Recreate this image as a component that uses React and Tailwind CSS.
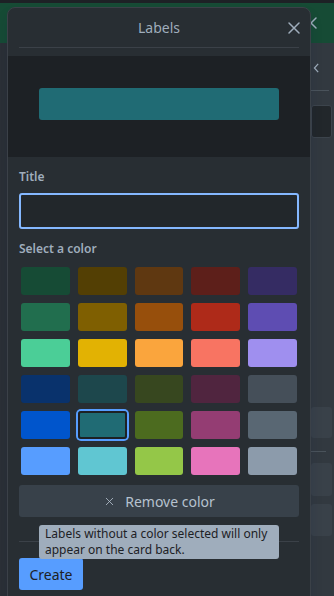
import { X } from "lucide-react";

const COLORS = [
  ["#164b35", "#533f04", "#5f3811", "#5d1f1a", "#352c63"],
  ["#216e4e", "#7f5f01", "#974f0c", "#ae2a19", "#5e4db2"],
  ["#4bce97", "#e2b203", "#faa53d", "#f87462", "#9f8fef"],
  ["#09326c", "#1d474c", "#37471f", "#50253f", "#454f59"],
  ["#0055cc", "#206b74", "#4c6b1f", "#943d73", "#596773"],
  ["#579dff", "#60c6d2", "#94c748", "#e774bb", "#8c9bab"],
];

const SELECTED = "#206b74";

function CloseIcon({ className }) {
  return (
    <svg viewBox="0 0 16 16" className={className} fill="none" stroke="currentColor" strokeWidth="1.5" strokeLinecap="round">
      <path d="M3 3l10 10M13 3L3 13" />
    </svg>
  );
}

function Background() {
  return (
    <div className="flex h-full flex-col">
      <div className="h-[3px] bg-[#1d2125]" />
      <div className="flex h-[40px] items-center justify-end bg-[#164b35] pr-[15px] text-[#9fadbc]">
        <CloseIcon className="h-4 w-4" />
      </div>
      <div className="flex flex-1">
        <div className="flex-1 bg-[#2b3036]" />
        <div className="flex w-[26px] flex-col bg-[#323940] pl-[3px] pr-[2px]">
          <div className="mt-[20px] flex h-[10px] items-center pl-[2px] text-[#9fadbc]">
            <svg viewBox="0 0 8 12" className="h-[10px] w-[7px]" fill="none" stroke="currentColor" strokeWidth="1.5">
              <path d="M6 1L1.5 6 6 11" />
            </svg>
          </div>
          <div className="mt-[17px] h-px w-[18px] bg-[#4a535b]" />
          <div className="mt-[14px] h-[33px] rounded-[3px] border border-[#3c444c] bg-[#22272b]" />
          <div className="flex-1" />
          <div className="h-[31px] rounded-[3px] bg-[#394149]" />
          <div className="mt-[13px] h-px w-[15px] bg-[#4a535b]" />
          <div className="mt-[11px] h-[33px] rounded-[3px] bg-[#394149]" />
          <div className="mt-[8px] h-[32px] rounded-[3px] bg-[#394149]" />
          <div className="h-[60px]" />
        </div>
      </div>
    </div>
  );
}

function Swatch({ color }) {
  const selected = color === SELECTED;
  return (
    <div
      className={
        selected
          ? "h-[28px] rounded-[3px] shadow-[0_0_0_2px_#579dff,inset_0_0_0_2px_#1d2125]"
          : "h-[28px] rounded-[3px]"
      }
      style={{ backgroundColor: color }}
    />
  );
}

export default function App() {
  return (
    <div
      className="relative h-[596px] w-[334px] overflow-hidden"
      style={{ fontFamily: '"Noto Sans", "Liberation Sans", sans-serif' }}
    >
      <Background />

      <div className="absolute left-[7px] top-[7px] bottom-[-20px] w-[304px] rounded-lg border border-[#3b4148] bg-[#282e33] shadow-[0_8px_12px_#091e4226]">
        <div className="relative mx-[11px] flex h-[40px] items-center justify-center border-b border-[#3b4148]">
          <span className="text-[14px] text-[#9fadbc]">Labels</span>
          <button type="button" className="absolute right-[-3px] top-[12px] text-[#9fadbc]">
            <CloseIcon className="h-4 w-4" />
          </button>
        </div>

        <div className="mt-2 flex h-[101px] justify-center bg-[#1d2125] pt-[32px]">
          <div className="h-8 w-[240px] rounded-[3px] bg-[#206b74]" />
        </div>

        <div className="px-[11px]">
          <label className="mt-3 block text-[12px] font-semibold leading-4 text-[#9fadbc]">Title</label>
          <input
            type="text"
            className="mt-2 block h-9 w-full rounded-[3px] border-2 border-[#85b8ff] bg-[#22272b] px-2 text-[14px] text-[#b6c2cf] outline-none"
          />

          <div className="mt-3 text-[12px] font-semibold leading-4 text-[#9fadbc]">Select a color</div>

          <div className="mt-[10px] grid grid-cols-5 gap-2 px-[2px]">
            {COLORS.flat().map((c) => (
              <Swatch key={c} color={c} />
            ))}
          </div>

          <div className="relative mt-[10px]">
            <button
              type="button"
              className="flex h-8 w-full items-center justify-center gap-[9px] rounded-[3px] bg-[#38414a] text-[14px] text-[#b6c2cf]"
            >
              <X className="h-[13px] w-[13px]" strokeWidth={1.5} />
              <span>Remove color</span>
            </button>
            <div className="absolute left-[20px] top-full z-10 mt-2 w-[240px] rounded-[3px] bg-[#9fadbc] px-[6px] py-px text-[12px] leading-4 text-[#1d2125]">
              Labels without a color selected will only appear on the card back.
            </div>
          </div>

          <div className="mt-6 h-px bg-[#3b4148]" />

          <button
            type="button"
            className="mt-4 h-8 w-[64px] rounded-[3px] bg-[#579dff] text-[14px] text-[#1d2125]"
          >
            Create
          </button>
        </div>
      </div>
    </div>
  );
}
